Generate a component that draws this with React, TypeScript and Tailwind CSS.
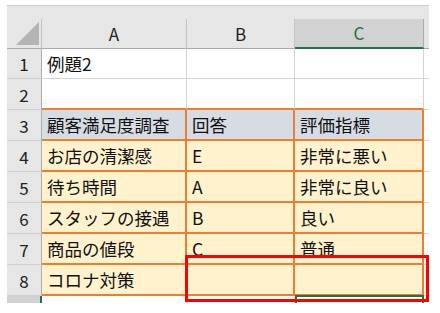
import React from 'react';

const font = { fontFamily: '"Noto Sans CJK JP", "Noto Sans", sans-serif' };

type Row = { n: number; a: string; b: string; c: string };

const rows: Row[] = [
  { n: 1, a: '例題2', b: '', c: '' },
  { n: 2, a: '', b: '', c: '' },
  { n: 3, a: '顧客満足度調査', b: '回答', c: '評価指標' },
  { n: 4, a: 'お店の清潔感', b: 'E', c: '非常に悪い' },
  { n: 5, a: '待ち時間', b: 'A', c: '非常に良い' },
  { n: 6, a: 'スタッフの接遇', b: 'B', c: '良い' },
  { n: 7, a: '商品の値段', b: 'C', c: '普通' },
  { n: 8, a: 'コロナ対策', b: '', c: '' },
];

const Cell: React.FC<{ row: number; text: string }> = ({ row, text }) => {
  let cls = 'border-r border-b border-[#d4d4d4] bg-white';
  if (row === 2) cls = 'border-r border-[#d4d4d4] border-b-2 border-b-[#ed7d31] bg-white';
  if (row === 3) cls = 'border-r-2 border-b-2 border-[#ed7d31] bg-[#d6dce4]';
  if (row > 3) cls = 'border-r-2 border-b-2 border-[#ed7d31] bg-[#fff2cc]';
  return (
    <div className={`flex items-center pl-[5px] pt-[1px] text-[17.5px] leading-none text-[#111] whitespace-nowrap overflow-hidden ${cls}`}>
      {text}
    </div>
  );
};

export default function App() {
  return (
    <div className="relative w-[440px] h-[313px] bg-white overflow-hidden" style={font}>
      <div className="ml-[7px] mt-[5px] w-[422px] h-[298px] overflow-hidden">
        <div className="h-[14px] bg-[#e6e6e6] border-t border-[#cfcfcf]" />
        <div className="grid grid-cols-[35px_145px_108px_129px_5px] grid-rows-[30px_30px_31px_31px_31px_31px_31px_31px_31px_7px]">
          {/* column headers */}
          <div className="relative bg-[#e6e6e6] border-r border-[#c4c4c4] border-b border-b-[#ababab]">
            <svg className="absolute right-[2px] bottom-[3px]" width="23" height="23" viewBox="0 0 23 23">
              <polygon points="23,0 23,23 0,23" fill="#b4b4b4" />
            </svg>
          </div>
          <div className="flex items-center justify-center bg-[#e6e6e6] border-r border-[#c4c4c4] border-b border-b-[#ababab] text-[17px] text-[#222]">A</div>
          <div className="flex items-center justify-center bg-[#e6e6e6] border-r border-[#c4c4c4] border-b border-b-[#ababab] text-[17px] text-[#222]">B</div>
          <div className="flex items-center justify-center bg-[#d2d2d2] border-r border-[#ababab] border-b-2 border-b-[#217346] text-[17px] text-[#217346]">C</div>
          <div className="bg-[#e6e6e6] border-b border-[#ababab]" />

          {rows.map((r) => (
            <React.Fragment key={r.n}>
              <div className="flex items-center justify-center pt-[1px] bg-[#e6e6e6] border-r border-r-[#ababab] border-b border-b-[#d0d0d0] text-[17px] text-[#222]">
                {r.n}
              </div>
              <Cell row={r.n} text={r.a} />
              <Cell row={r.n} text={r.b} />
              <Cell row={r.n} text={r.c} />
              <div className="border-b border-[#d4d4d4] bg-white" />
            </React.Fragment>
          ))}

          {/* row 9, partly visible */}
          <div className="bg-[#d2d2d2] border-r-2 border-[#217346]" />
          <div className="border-r border-[#d4d4d4] bg-white" />
          <div className="border-r border-[#d4d4d4] bg-white" />
          <div className="border-x-2 border-t-2 border-[#217346] -mt-[1px] bg-white" />
          <div className="bg-white" />
        </div>
      </div>

      {/* red annotation box */}
      <div className="absolute left-[185px] top-[255px] w-[244px] h-[47px] border-[3px] border-[#ff0000]" />
    </div>
  );
}
